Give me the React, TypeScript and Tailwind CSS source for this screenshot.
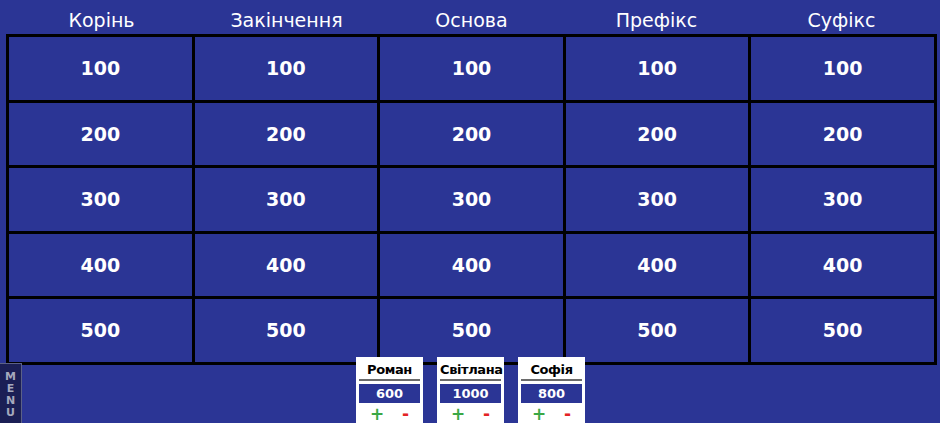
import React from 'react';

const categories = ['Корінь', 'Закінчення', 'Основа', 'Префікс', 'Суфікс'];
const values = [100, 200, 300, 400, 500];

const players = [
  { name: 'Роман', score: 600 },
  { name: 'Світлана', score: 1000 },
  { name: 'Софія', score: 800 },
];

const PlayerCard: React.FC<{ name: string; score: number }> = ({ name, score }) => (
  <div className="w-[67px] h-[70px] bg-white px-[3px] pt-[3px] flex flex-col">
    <div className="h-[21px] text-[13px] font-bold leading-[20px] text-black text-center border-b-2 border-[#6b6b6b] tracking-[-0.4px] whitespace-nowrap">
      {name}
    </div>
    <div className="mt-[3px] h-[19px] bg-[#2b3595] text-white text-[13px] font-bold leading-[19px] text-center">
      {score}
    </div>
    <div className="flex justify-between px-[11px] text-[17px] font-bold leading-[22px]">
      <span className="text-[#3aa845]">+</span>
      <span className="text-[#e32424]">-</span>
    </div>
  </div>
);

export default function App() {
  return (
    <div
      className="relative w-[940px] h-[423px] overflow-hidden bg-[#2b3595]"
      style={{ fontFamily: '"DejaVu Sans", Verdana, sans-serif' }}
    >
      <div className="ml-[6px] w-[931px]">
        <div className="grid grid-cols-5 h-[34px] px-[3px]">
          {categories.map((c) => (
            <div key={c} className="text-center text-white text-[19px] leading-[24px] pt-[8px]">
              {c}
            </div>
          ))}
        </div>
        <div className="grid grid-cols-5 grid-rows-5 gap-[3px] p-[3px] bg-black h-[331px]">
          {values.map((v) =>
            categories.map((c) => (
              <div key={c + v} className="bg-[#2b3595] flex items-center justify-center text-white text-[19px] font-bold">
                {v}
              </div>
            ))
          )}
        </div>
      </div>

      <div className="relative z-10 -mt-[8px] flex justify-center gap-[14px] pl-[1px]">
        {players.map((p) => (
          <PlayerCard key={p.name} name={p.name} score={p.score} />
        ))}
      </div>

      {/* side menu tab */}
      <div className="absolute left-0 top-[363px] z-20 w-[22px] h-[60px] bg-[#1b1f55] border-r border-t border-[#5c6186] flex flex-col items-center pt-[7px] text-[#a5a9bd] text-[11px] font-bold leading-[12px]">
        <span>M</span>
        <span>E</span>
        <span>N</span>
        <span>U</span>
      </div>
    </div>
  );
}
